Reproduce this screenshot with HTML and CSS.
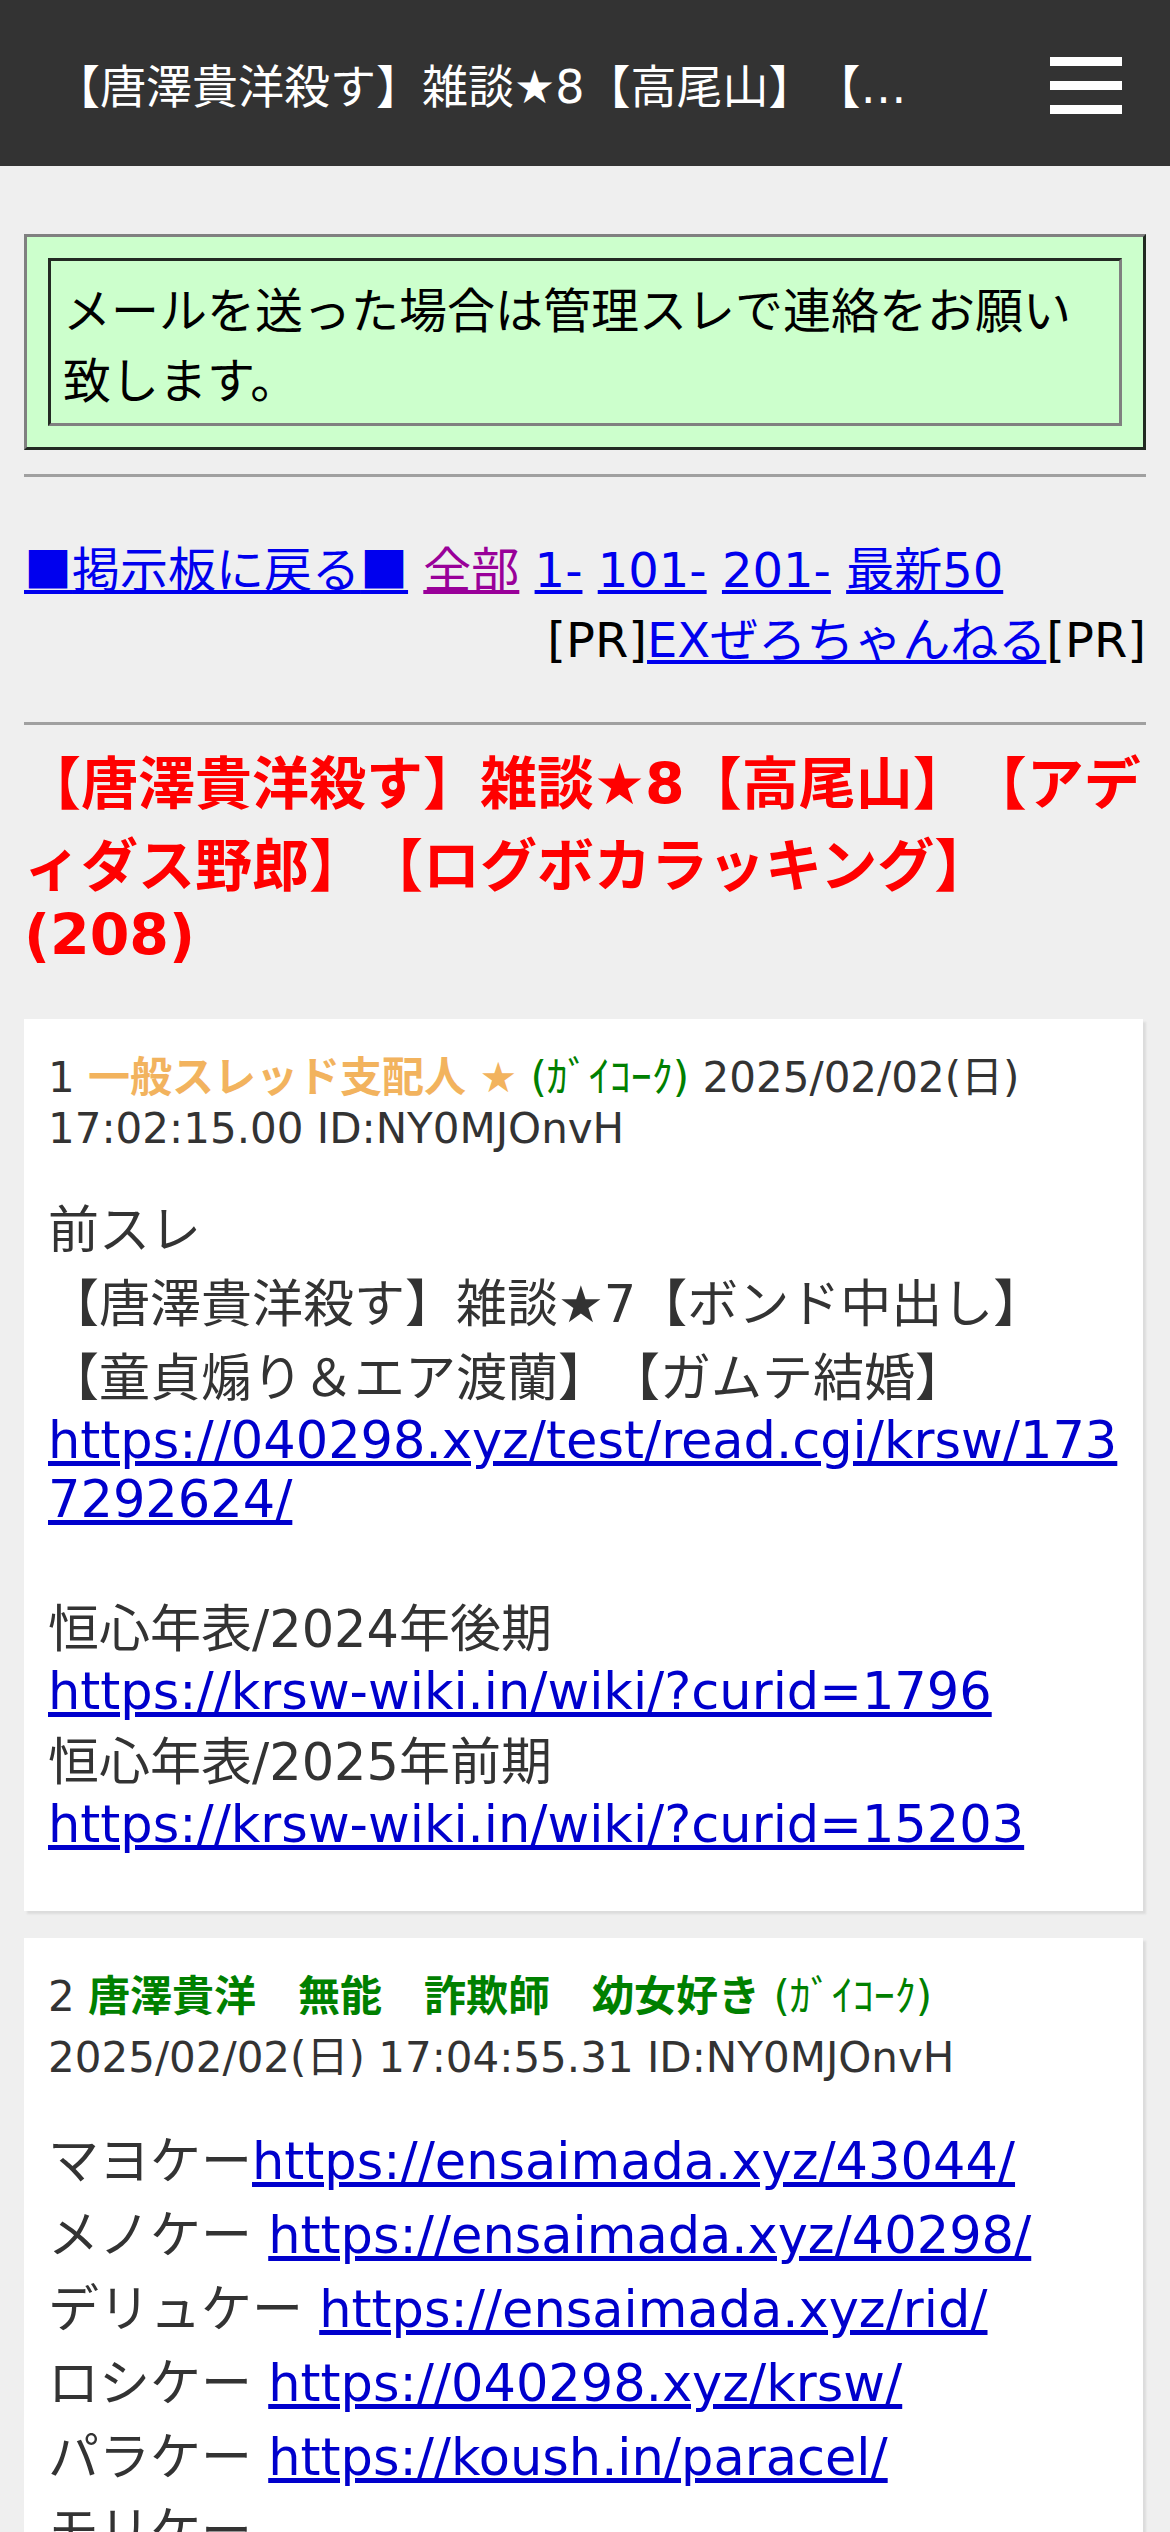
FILE: index.html
```html
<!DOCTYPE html>
<html lang="ja">
<head>
    <meta charset="UTF-8">
    <meta name="viewport" content="width=device-width, initial-scale=1.0">
    <title>【唐澤貴洋殺す】雑談★8【高尾山】【アディダス野郎】【ログボカラッキング】</title>
    <link rel="stylesheet" href="styles.css">
</head>
<body>
    <header class="topbar">
        <div class="topbar-title">【唐澤貴洋殺す】雑談★8【高尾山】【アディダス野郎】【ログボカラッキング】</div>
        <div class="menu-btn"><span></span><span></span><span></span></div>
    </header>

    <main class="page">
        <div class="notice">
            <div class="notice-body">メールを送った場合は管理スレで連絡をお願い致します。</div>
        </div>

        <hr class="divider first">

        <nav class="thread-nav">
            <div class="nav-links">
                <a href="#"><span class="cjk">■</span>掲示板に戻る<span class="cjk">■</span></a>
                <a href="#" class="visited">全部</a>
                <a href="#">1-</a>
                <a href="#">101-</a>
                <a href="#">201-</a>
                <a href="#">最新50</a>
            </div>
            <div class="nav-pr">[PR]<a href="#">EXぜろちゃんねる</a>[PR]</div>
        </nav>

        <hr class="divider second">

        <h1 class="thread-title">【唐澤貴洋殺す】雑談★8【高尾山】【アディダス野郎】【ログボカラッキング】(208)</h1>

        <article class="post">
            <div class="post-head">
                1 <b class="name admin">一般スレッド支配人</b> <span class="name admin">★</span> <span class="trip">(ｶﾞｲｺｰｸ)</span> 2025/02/02(日) 17:02:15.00 ID:NY0MJOnvH
            </div>
            <div class="post-body">
                前スレ<br>
                【唐澤貴洋殺す】雑談★7【ボンド中出し】<br>
                【童貞煽り＆エア渡蘭】【ガムテ結婚】<br>
                <a href="#">https://040298.xyz/test/read.cgi/krsw/1737292624/</a><br>
                <br>
                恒心年表/2024年後期<br>
                <a href="#">https://krsw-wiki.in/wiki/?curid=1796</a><br>
                恒心年表/2025年前期<br>
                <a href="#">https://krsw-wiki.in/wiki/?curid=15203</a>
            </div>
        </article>

        <article class="post">
            <div class="post-head">
                2 <b class="name">唐澤貴洋　無能　詐欺師　幼女好き</b> <span class="trip">(ｶﾞｲｺｰｸ)</span> 2025/02/02(日) 17:04:55.31 ID:NY0MJOnvH
            </div>
            <div class="post-body">
                マヨケー<a href="#">https://ensaimada.xyz/43044/</a><br>
                メノケー <a href="#">https://ensaimada.xyz/40298/</a><br>
                デリュケー <a href="#">https://ensaimada.xyz/rid/</a><br>
                ロシケー <a href="#">https://040298.xyz/krsw/</a><br>
                パラケー <a href="#">https://koush.in/paracel/</a><br>
                モリケー
            </div>
        </article>
    </main>
</body>
</html>
```

FILE: styles.css
```css
body {
    margin: 0;
    background-color: #efefef;
    font-family: "DejaVu Sans", "Noto Sans CJK JP", sans-serif;
    color: #333;
    text-spacing-trim: space-all;
}
.cjk {
    font-family: "Noto Sans CJK JP", sans-serif;
}

/* top bar */
.topbar {
    background-color: #333;
    height: 166px;
    display: flex;
    align-items: center;
    padding: 0 48px 0 54px;
}
.topbar-title {
    width: 866px;
    font-size: 46px;
    color: #fff;
    white-space: nowrap;
    overflow: hidden;
    text-overflow: ellipsis;
}
.menu-btn {
    margin-left: auto;
    margin-top: 5px;
    width: 72px;
    display: flex;
    flex-direction: column;
    gap: 15px;
}
.menu-btn span {
    display: block;
    height: 9px;
    background-color: #fff;
}

.page {
    padding: 68px 24px 0;
}

/* notice box */
.notice {
    background-color: #ccffcc;
    border: 3px solid;
    border-color: #808080 #222a22 #222a22 #808080;
    padding: 21px;
}
.notice-body {
    border: 3px solid;
    border-color: #222a22 #808080 #808080 #222a22;
    padding: 11px 12px;
    font-size: 48px;
    color: #000;
}

.divider {
    border: 0;
    border-top: 3px solid #a0a0a0;
    height: 0;
    margin: 0;
}
.divider.first {
    margin-top: 24px;
}
.divider.second {
    margin-top: 51px;
}

/* navigation */
.thread-nav {
    padding-top: 54px;
    font-size: 48px;
    color: #000;
}
.thread-nav a {
    color: #0000ee;
}
.thread-nav a.visited {
    color: #990099;
}
.nav-pr {
    text-align: right;
}

.thread-title {
    margin: 13px 0 51px;
    font-size: 57px;
    font-weight: bold;
    color: #ff0000;
}

/* posts */
.post {
    background-color: #fff;
    padding: 24px;
    margin: 0 3px 27px 0;
    box-shadow: 3px 3px 2px #dcdcdc;
}
.post-head {
    font-size: 42px;
    color: #333;
}
.name {
    color: #008000;
}
.name.admin {
    color: #f2b35e;
}
.trip {
    color: #008000;
}
.post-body {
    margin-top: 36px;
    padding-bottom: 33px;
    font-size: 51px;
    color: #333;
    word-break: break-all;
}
.post-body a {
    color: #0000cc;
}
```
